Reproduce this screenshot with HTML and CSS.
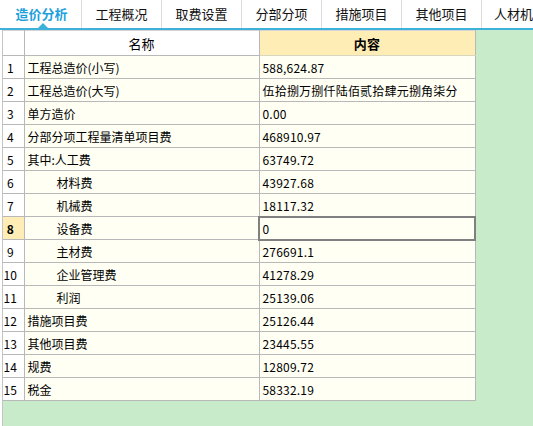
FILE: index.html
```html
<!DOCTYPE html>
<html lang="zh-CN">
<head>
  <meta charset="UTF-8" />
  <title>造价分析</title>
  <link rel="stylesheet" href="styles.css">
</head>
<body>

  <div class="tabs">
    <div class="tab active">造价分析</div>
    <div class="tab">工程概况</div>
    <div class="tab">取费设置</div>
    <div class="tab">分部分项</div>
    <div class="tab">措施项目</div>
    <div class="tab">其他项目</div>
    <div class="tab last">人材机</div>
  </div>

  <div class="sheet">
    <table class="grid">
      <thead>
        <tr>
          <th class="num"></th>
          <th class="name">名称</th>
          <th class="value">内容</th>
        </tr>
      </thead>
      <tbody>
        <tr><td class="num">1</td><td class="name">工程总造价(小写)</td><td class="value">588,624.87</td></tr>
        <tr><td class="num">2</td><td class="name">工程总造价(大写)</td><td class="value">伍拾捌万捌仟陆佰贰拾肆元捌角柒分</td></tr>
        <tr><td class="num">3</td><td class="name">单方造价</td><td class="value">0.00</td></tr>
        <tr><td class="num">4</td><td class="name">分部分项工程量清单项目费</td><td class="value">468910.97</td></tr>
        <tr><td class="num">5</td><td class="name">其中:人工费</td><td class="value">63749.72</td></tr>
        <tr><td class="num">6</td><td class="name sub">材料费</td><td class="value">43927.68</td></tr>
        <tr><td class="num">7</td><td class="name sub">机械费</td><td class="value">18117.32</td></tr>
        <tr class="current"><td class="num">8</td><td class="name sub">设备费</td><td class="value selected">0</td></tr>
        <tr><td class="num">9</td><td class="name sub">主材费</td><td class="value">276691.1</td></tr>
        <tr><td class="num">10</td><td class="name sub">企业管理费</td><td class="value">41278.29</td></tr>
        <tr><td class="num">11</td><td class="name sub">利润</td><td class="value">25139.06</td></tr>
        <tr><td class="num">12</td><td class="name">措施项目费</td><td class="value">25126.44</td></tr>
        <tr><td class="num">13</td><td class="name">其他项目费</td><td class="value">23445.55</td></tr>
        <tr><td class="num">14</td><td class="name">规费</td><td class="value">12809.72</td></tr>
        <tr><td class="num">15</td><td class="name">税金</td><td class="value">58332.19</td></tr>
      </tbody>
    </table>
  </div>

</body>
</html>
```

FILE: styles.css
```css
* {
  margin: 0;
  padding: 0;
  box-sizing: border-box;
}

html, body {
  height: 100%;
  overflow: hidden;
  background: #ffffff;
  font-family: "Noto Sans CJK SC", "Liberation Sans", sans-serif;
  font-size: 12px;
  color: #000;
}

/* Tab strip */
.tabs {
  display: flex;
  height: 30px;
  padding-left: 2px;
  border-bottom: 2px solid #3eb1da;
  overflow: hidden;
  white-space: nowrap;
}

.tab {
  position: relative;
  flex: none;
  width: 80px;
  height: 28px;
  line-height: 28px;
  text-align: center;
  font-size: 13px;
  border-right: 1px solid #dcdcdc;
  color: #111;
}

.tab.last {
  width: 51px;
  text-align: left;
  padding-left: 12px;
  border-right: none;
}

.tab.active {
  color: #1ea0dd;
  font-weight: bold;
}

.tab.active::after {
  content: "";
  position: absolute;
  left: 36px;
  bottom: 0;
  border-left: 5px solid transparent;
  border-right: 5px solid transparent;
  border-bottom: 5px solid #3eb1da;
}

/* Sheet */
.sheet {
  height: calc(100% - 30px);
  margin-left: 2px;
  border-left: 1px solid #c4c4c4;
  background: #c8ecca;
}

.grid {
  border-collapse: collapse;
  table-layout: fixed;
  width: 472px;
  background: #fffff4;
}

.grid th,
.grid td {
  border: 1px solid #b8b8b8;
  height: 23px;
  padding: 0 3px;
  white-space: nowrap;
  overflow: hidden;
  font-weight: normal;
}

.grid th {
  height: 25px;
  background: #ffffff;
  text-align: center;
  font-size: 13px;
  border-top-color: #d4d4d4;
  border-left: none;
}

.grid th.value {
  background: #ffedb6;
  font-weight: bold;
  border-bottom-color: #d8d8c0;
}

.grid .num {
  width: 21px;
  padding: 0 6px 0 0;
  text-align: center;
  background: #ffffff;
  border-left: none;
}

.grid .name {
  width: 235px;
}

.grid .name.sub {
  padding-left: 32px;
}

.grid .value {
  width: 216px;
  letter-spacing: 0.2px;
}

.grid .current .num {
  background: #ffedb6;
  font-weight: bold;
}

.grid td.selected {
  outline: 2px solid #808080;
  outline-offset: -1px;
}
```
